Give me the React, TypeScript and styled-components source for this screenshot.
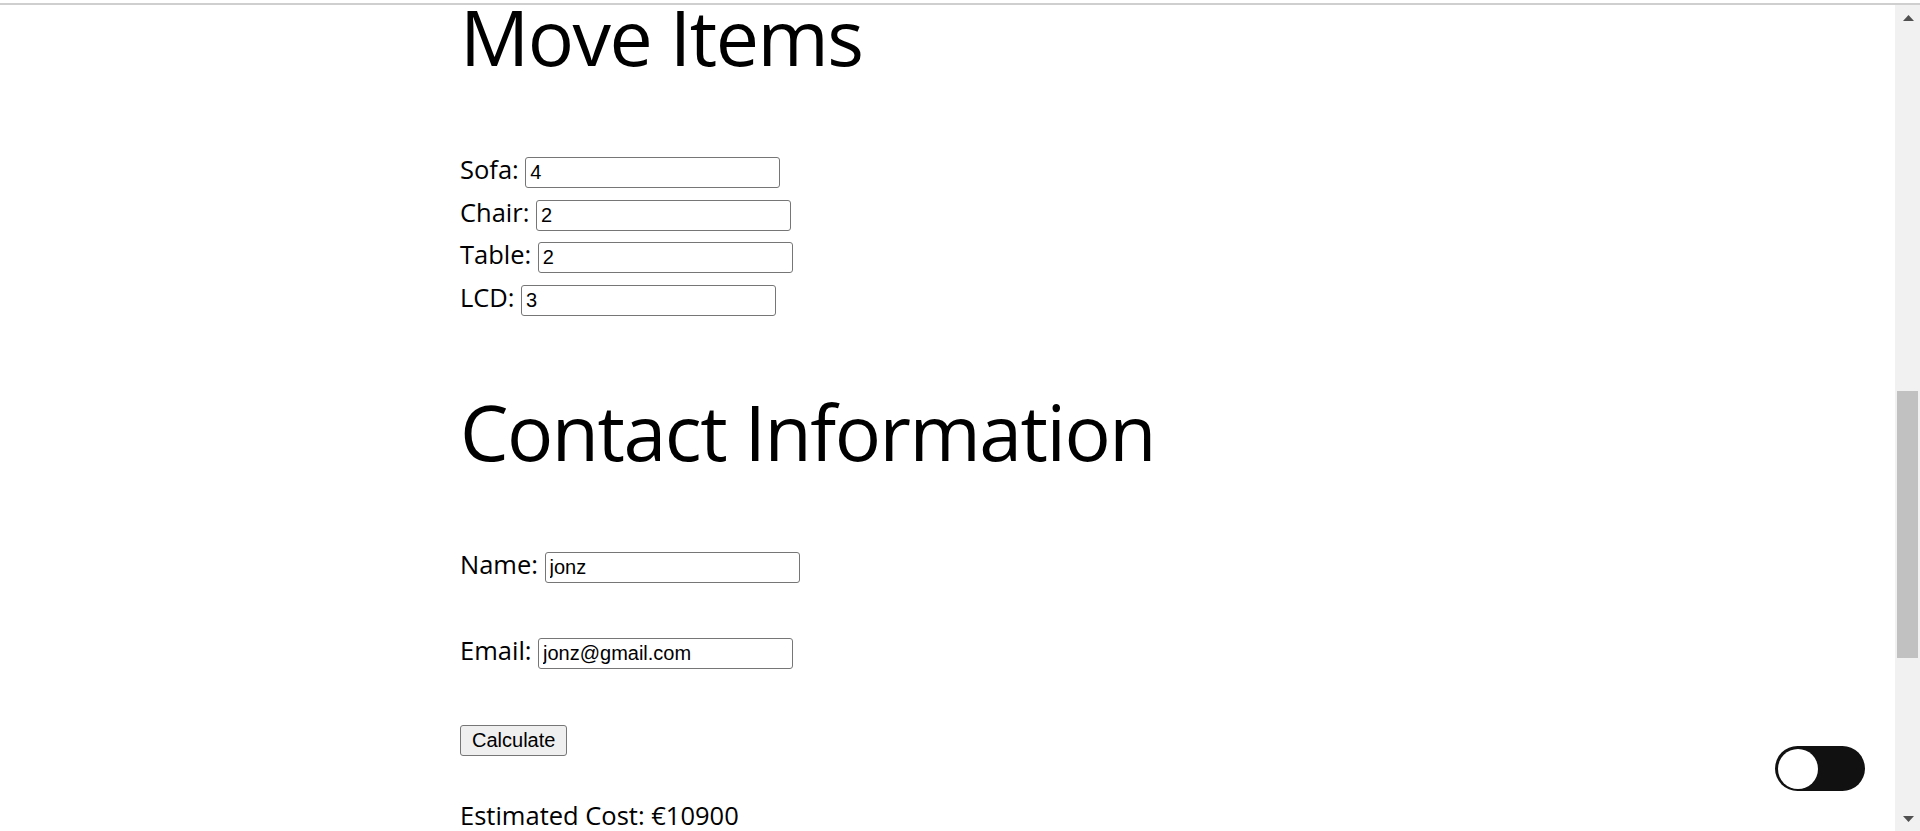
import React from "react";
import styled, { createGlobalStyle } from "styled-components";

const GlobalStyle = createGlobalStyle`
  html, body {
    margin: 0;
    padding: 0;
    background: #ffffff;
    overflow: hidden;
  }
  body {
    font-family: "Open Sans", "Noto Sans", sans-serif;
    color: #000000;
  }
`;

const Window = styled.div`
  display: flex;
  flex-direction: column;
  height: 831px;
  padding-top: 3px;
  box-sizing: border-box;
  background: #ffffff;
`;

const Divider = styled.div`
  height: 2px;
  background: #cfcfcf;
  flex: none;
`;

const Body = styled.div`
  flex: 1;
  display: flex;
  min-height: 0;
`;

const Page = styled.main`
  flex: 1;
  padding-left: 460px;
  overflow: hidden;
  display: flex;
  flex-direction: column;
  align-items: flex-start;
`;

const Heading = styled.h2<{ $top: number }>`
  margin: ${(p) => p.$top}px 0 0;
  font-family: "Open Sans", sans-serif;
  font-weight: 400;
  font-size: 77px;
  letter-spacing: -1.5px;
  line-height: 60px;
  height: 60px;
  flex: none;
  white-space: nowrap;
`;

const FieldList = styled.div<{ $top: number; $gap: number }>`
  margin-top: ${(p) => p.$top}px;
  display: flex;
  flex-direction: column;
  align-items: flex-start;
  gap: ${(p) => p.$gap}px;
  flex: none;
`;

const Field = styled.label`
  display: flex;
  align-items: baseline;
  gap: 6.5px;
  height: 31px;
  font-size: 25.5px;
  line-height: 24px;
`;

const Input = styled.input`
  box-sizing: border-box;
  width: 255px;
  height: 31px;
  margin: 0;
  padding: 0 4px;
  border: 1px solid #767676;
  border-radius: 3px;
  background: #ffffff;
  color: #000000;
  font-family: "Liberation Sans", Arial, sans-serif;
  font-size: 20px;
  outline: none;
`;

const Button = styled.button`
  box-sizing: border-box;
  height: 31.4px;
  margin: 0;
  padding: 0 11px;
  border: 1px solid #767676;
  border-radius: 3px;
  background: #efefef;
  color: #000000;
  font-family: "Liberation Sans", Arial, sans-serif;
  font-size: 20px;
  line-height: 1;
`;

const Estimate = styled.p`
  margin: 44px 0 0;
  font-size: 25.5px;
  line-height: 30px;
  white-space: nowrap;
  flex: none;
`;

const Scrollbar = styled.div`
  width: 25px;
  flex: none;
  background: #f1f1f1;
  display: flex;
  flex-direction: column;
`;

const ArrowButton = styled.div`
  height: 25px;
  flex: none;
  display: flex;
  align-items: center;
  justify-content: center;
  padding-left: 1px;
`;

const Track = styled.div<{ $offset: number }>`
  flex: 1;
  padding: ${(p) => p.$offset}px 2px 0;
`;

const Thumb = styled.div<{ $size: number }>`
  height: ${(p) => p.$size}px;
  background: #c1c1c1;
`;

const ThemeToggle = styled.button<{ $on: boolean }>`
  position: fixed;
  right: 55px;
  bottom: 40px;
  width: 90px;
  height: 45px;
  padding: 2.5px;
  border: none;
  border-radius: 23px;
  background: #111111;
  display: flex;
  justify-content: ${(p) => (p.$on ? "flex-end" : "flex-start")};
  cursor: pointer;
  box-sizing: border-box;
`;

const Knob = styled.span`
  width: 40px;
  height: 40px;
  border-radius: 50%;
  background: #ffffff;
`;

const items = [
  { label: "Sofa:", value: "4" },
  { label: "Chair:", value: "2" },
  { label: "Table:", value: "2" },
  { label: "LCD:", value: "3" },
];

export default function App() {
  const [dark, setDark] = React.useState(false);
  return (
    <>
      <GlobalStyle />
      <Window>
        <Divider />
        <Body>
          <Page>
            <Heading $top={2}>Move Items</Heading>
            <FieldList $top={90} $gap={11.7}>
              {items.map((it) => (
                <Field key={it.label}>
                  {it.label}
                  <Input type="text" defaultValue={it.value} />
                </Field>
              ))}
            </FieldList>
            <Heading $top={86}>Contact Information</Heading>
            <FieldList $top={89.6} $gap={55.5}>
              <Field>
                Name:
                <Input type="text" defaultValue="jonz" />
              </Field>
              <Field>
                Email:
                <Input type="email" defaultValue="jonz@gmail.com" />
              </Field>
              <Button type="button">Calculate</Button>
            </FieldList>
            <Estimate>Estimated Cost: €10900</Estimate>
          </Page>
          <Scrollbar>
            <ArrowButton>
              <svg width="11" height="6" viewBox="0 0 11 6">
                <polygon points="5.5,0 11,6 0,6" fill="#505050" />
              </svg>
            </ArrowButton>
            <Track $offset={361}>
              <Thumb $size={267} />
            </Track>
            <ArrowButton>
              <svg width="11" height="6" viewBox="0 0 11 6">
                <polygon points="0,0 11,0 5.5,6" fill="#505050" />
              </svg>
            </ArrowButton>
          </Scrollbar>
        </Body>
        <ThemeToggle $on={dark} onClick={() => setDark((d) => !d)} aria-label="Toggle theme">
          <Knob />
        </ThemeToggle>
      </Window>
    </>
  );
}
